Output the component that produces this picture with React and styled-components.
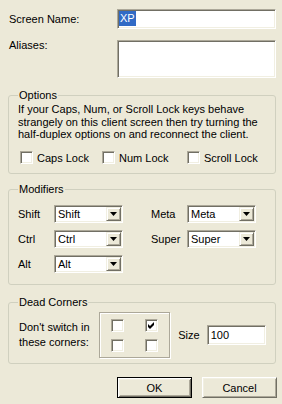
import React from "react";
import styled, { createGlobalStyle } from "styled-components";

const Global = createGlobalStyle`
  html, body { margin: 0; padding: 0; background: #ECE9D8; }
  body {
    font-family: "Liberation Sans", Arial, sans-serif;
    font-size: 11px;
    color: #000;
  }
  * { box-sizing: border-box; }
`;

const Page = styled.div`
  width: 282px;
  height: 404px;
  padding: 9px 6px 0 8px;
  display: flex;
  flex-direction: column;
  background: #ECE9D8;
`;

const FieldRow = styled.div`
  display: flex;
  align-items: ${(p) => (p.$top ? "flex-start" : "center")};
  margin-top: ${(p) => p.$mt || 0}px;
`;

const Label = styled.div`
  width: 109px;
  padding-left: 1px;
  line-height: 13px;
  margin-top: ${(p) => p.$mt || 0}px;
  white-space: nowrap;
`;

const sunken = `
  background: #fff;
  border: 1px solid;
  border-color: #ACA899 #fff #fff #ACA899;
  box-shadow: inset 1px 1px 0 #716F64, inset -1px -1px 0 #F1EFE2;
`;

const TextBox = styled.div`
  ${sunken}
  width: ${(p) => p.$w}px;
  height: ${(p) => p.$h}px;
  padding: 1px 1px 0 ${(p) => p.$pl ?? 1}px;
  line-height: ${(p) => p.$lh || 15}px;
  white-space: nowrap;
`;

const Selected = styled.span`
  display: inline-block;
  background: #316AC5;
  color: #fff;
  padding: 0 1px;
  line-height: 15px;
`;

const Group = styled.fieldset`
  margin: ${(p) => p.$mt}px 0 0;
  padding: ${(p) => p.$pt}px 9px ${(p) => p.$pb}px;
  border: 1px solid #D0D0BF;
  border-radius: 3px;
  min-width: 0;
`;

const Legend = styled.legend`
  padding: 0 1px;
  line-height: 13px;
  font-size: 11px;
`;

const Paragraph = styled.p`
  margin: 0;
  line-height: 12.5px;
`;

const CheckRow = styled.div`
  display: grid;
  grid-template-columns: 82px 85px auto;
  margin-top: 10.5px;
  margin-left: 2px;
`;

const CheckItem = styled.label`
  display: flex;
  align-items: center;
  gap: 4px;
  height: 13px;
  white-space: nowrap;
`;

const Box = styled.span`
  ${sunken}
  display: flex;
  align-items: center;
  justify-content: center;
  width: 13px;
  height: 13px;
  flex: none;
`;

const Check = ({ checked }) => (
  <Box>
    {checked && (
      <svg width="7" height="7" viewBox="0 0 7 7">
        <polygon points="0,2 2,4 6,0 6,3 2,7 0,5" fill="#000" />
      </svg>
    )}
  </Box>
);

const ModGrid = styled.div`
  display: grid;
  grid-template-columns: 36px 97px 36px 69px;
  grid-auto-rows: 18px;
  row-gap: 7px;
  align-items: center;
`;

const ModLabel = styled.span`
  white-space: nowrap;
`;

const Combo = styled.div`
  ${sunken}
  width: 69px;
  height: 18px;
  display: flex;
  align-items: stretch;
`;

const ComboText = styled.span`
  flex: 1;
  padding-left: 3px;
  line-height: 16px;
`;

const raised = `
  background: #ECE9D8;
  border: 1px solid;
  border-color: #F1EFE2 #716F64 #716F64 #F1EFE2;
  box-shadow: inset 1px 1px 0 #fff, inset -1px -1px 0 #ACA899;
`;

const DropBtn = styled.span`
  ${raised}
  width: 15px;
  margin: 1px;
  display: flex;
  align-items: center;
  justify-content: center;
`;

const Select = ({ value }) => (
  <Combo>
    <ComboText>{value}</ComboText>
    <DropBtn>
      <svg width="7" height="4" viewBox="0 0 7 4">
        <polygon points="0,0 7,0 3.5,4" fill="#000" />
      </svg>
    </DropBtn>
  </Combo>
);

const CornerRow = styled.div`
  display: flex;
  align-items: center;
`;

const CornerText = styled.div`
  width: 82px;
  padding-left: 1px;
  line-height: 15px;
`;

const Frame = styled.div`
  width: 72px;
  height: 46px;
  border: 1px solid #ACA899;
  box-shadow: inset 1px 1px 0 #fff, 1px 1px 0 #fff;
  padding: 6px 0 0 11px;
  display: grid;
  grid-template-columns: 13px 13px;
  grid-template-rows: 13px 13px;
  column-gap: 21px;
  row-gap: 7px;
`;

const SizeLabel = styled.span`
  margin-left: 8px;
  margin-right: 7px;
`;

const ButtonRow = styled.div`
  display: flex;
  justify-content: flex-end;
  gap: 10px;
  margin-top: 13px;
  margin-right: -1px;
`;

const Button = styled.button`
  width: 75px;
  height: 21px;
  font: inherit;
  color: #000;
  padding: 0;
  background: #ECE9D8;
  border: 1px solid;
  border-color: ${(p) =>
    p.$default ? "#000" : "#fff #716F64 #716F64 #fff"};
  box-shadow: ${(p) =>
    p.$default
      ? "inset 1px 1px 0 #fff, inset -1px -1px 0 #716F64, inset 2px 2px 0 #F1EFE2, inset -2px -2px 0 #ACA899"
      : "inset 1px 1px 0 #F1EFE2, inset -1px -1px 0 #ACA899"};
`;

export default function App() {
  return (
    <Page>
      <Global />
      <FieldRow>
        <Label>Screen Name:</Label>
        <TextBox $w={159} $h={20}>
          <Selected>XP</Selected>
        </TextBox>
      </FieldRow>
      <FieldRow $top $mt={11}>
        <Label $mt={-1}>Aliases:</Label>
        <TextBox $w={159} $h={38} />
      </FieldRow>

      <Group $mt={11} $pt={1} $pb={9}>
        <Legend>Options</Legend>
        <Paragraph>
          If your Caps, Num, or Scroll Lock keys behave strangely on this
          client screen then try turning the half-duplex options on and
          reconnect the client.
        </Paragraph>
        <CheckRow>
          <CheckItem>
            <Check /> Caps Lock
          </CheckItem>
          <CheckItem>
            <Check /> Num Lock
          </CheckItem>
          <CheckItem>
            <Check /> Scroll Lock
          </CheckItem>
        </CheckRow>
      </Group>

      <Group $mt={9} $pt={9} $pb={11}>
        <Legend>Modifiers</Legend>
        <ModGrid>
          <ModLabel>Shift</ModLabel>
          <Select value="Shift" />
          <ModLabel>Meta</ModLabel>
          <Select value="Meta" />
          <ModLabel>Ctrl</ModLabel>
          <Select value="Ctrl" />
          <ModLabel>Super</ModLabel>
          <Select value="Super" />
          <ModLabel>Alt</ModLabel>
          <Select value="Alt" />
        </ModGrid>
      </Group>

      <Group $mt={11} $pt={3} $pb={5}>
        <Legend>Dead Corners</Legend>
        <CornerRow>
          <CornerText>
            Don't switch in
            <br />
            these corners:
          </CornerText>
          <Frame>
            <Check />
            <Check checked />
            <Check />
            <Check />
          </Frame>
          <SizeLabel>Size</SizeLabel>
          <TextBox $w={60} $h={20} $pl={3} $lh={16}>
            100
          </TextBox>
        </CornerRow>
      </Group>

      <ButtonRow>
        <Button $default>OK</Button>
        <Button>Cancel</Button>
      </ButtonRow>
    </Page>
  );
}
